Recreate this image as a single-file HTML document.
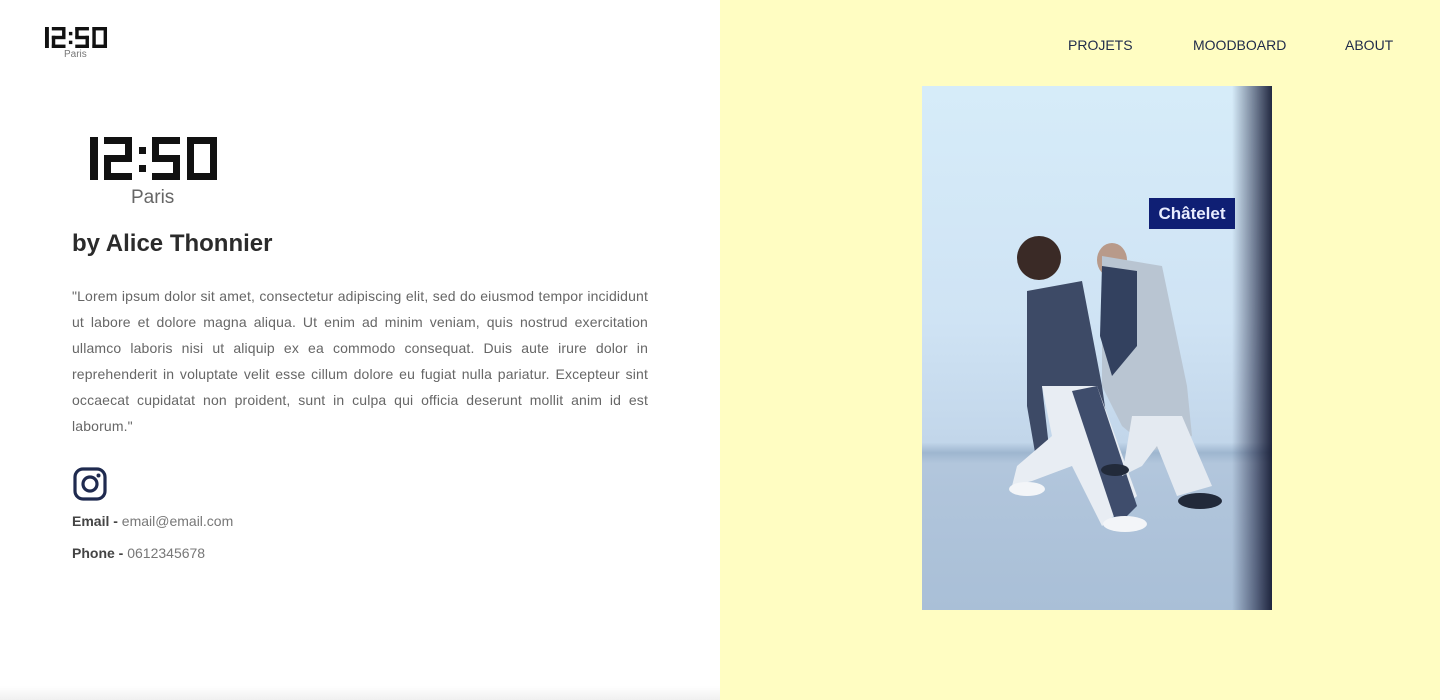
<!DOCTYPE html>
<html><head><meta charset="utf-8"><style>
*{margin:0;padding:0;box-sizing:border-box}
body{width:1440px;height:700px;overflow:hidden;font-family:"Liberation Sans",Arial,sans-serif;background:#fff;position:relative}
.left{position:absolute;left:0;top:0;width:720px;height:700px;background:#fff}
.right{position:absolute;left:720px;top:0;width:720px;height:700px;background:#fffdc2}
.shadow{position:absolute;left:0;bottom:0;width:720px;height:14px;background:linear-gradient(to bottom,rgba(0,0,0,0),rgba(0,0,0,0.06))}
nav a{position:absolute;top:37px;font-size:14px;color:#1e2a4a;text-decoration:none}
h2{position:absolute;left:72px;top:230px;font-size:24px;font-weight:bold;color:#2b2b2b}
p.lorem{position:absolute;left:72px;top:283px;width:576px;font-size:14px;line-height:26px;color:#666;text-align:justify;letter-spacing:0.15px}
.info{position:absolute;left:72px;font-size:14px;color:#777}
.info b{color:#444}
.photo{position:absolute;left:922px;top:86px;width:350px;height:524px;overflow:hidden;
background:linear-gradient(to bottom,#d6ecf9 0%,#cfe3f4 45%,#c2d6ea 68%,#9eb6cf 70%,#b2c6dc 72%,#a9bfd7 100%)}
.photo .dark{position:absolute;right:0;top:0;width:40px;height:100%;background:linear-gradient(to right,rgba(20,30,60,0),rgba(20,25,55,0.55) 60%,rgba(15,20,45,0.9))}
.sign{position:absolute;left:227px;top:112px;width:86px;height:31px;background:#0f1f74;color:#e8ecff;font-size:17px;font-weight:bold;text-align:center;line-height:31px}
</style></head><body>
<div class="left">
 <svg style="position:absolute;left:44px;top:27px" width="64" height="21" viewBox="0 0 127 43">
  <g fill="#111">
   <rect x="0" y="0" width="8" height="43"/>
   <rect x="14" y="0" width="28" height="7"/><rect x="35" y="0" width="7" height="22"/><rect x="14" y="18" width="28" height="7"/><rect x="14" y="18" width="7" height="25"/><rect x="14" y="36" width="28" height="7"/>
   <rect x="49" y="10" width="7" height="7"/><rect x="49" y="28" width="7" height="7"/>
   <rect x="62" y="0" width="28" height="7"/><rect x="62" y="0" width="7" height="22"/><rect x="62" y="18" width="28" height="7"/><rect x="83" y="18" width="7" height="25"/><rect x="62" y="36" width="28" height="7"/>
   <rect x="97" y="0" width="30" height="7"/><rect x="97" y="36" width="30" height="7"/><rect x="97" y="0" width="7" height="43"/><rect x="120" y="0" width="7" height="43"/>
  </g>
 </svg>
 <div style="position:absolute;left:64px;top:49px;font-size:10px;color:#777">Paris</div>
 <svg style="position:absolute;left:90px;top:137px" width="127" height="43" viewBox="0 0 127 43">
  <g fill="#111">
   <rect x="0" y="0" width="8" height="43"/>
   <rect x="14" y="0" width="28" height="7"/><rect x="35" y="0" width="7" height="22"/><rect x="14" y="18" width="28" height="7"/><rect x="14" y="18" width="7" height="25"/><rect x="14" y="36" width="28" height="7"/>
   <rect x="49" y="10" width="7" height="7"/><rect x="49" y="28" width="7" height="7"/>
   <rect x="62" y="0" width="28" height="7"/><rect x="62" y="0" width="7" height="22"/><rect x="62" y="18" width="28" height="7"/><rect x="83" y="18" width="7" height="25"/><rect x="62" y="36" width="28" height="7"/>
   <rect x="97" y="0" width="30" height="7"/><rect x="97" y="36" width="30" height="7"/><rect x="97" y="0" width="7" height="43"/><rect x="120" y="0" width="7" height="43"/>
  </g>
 </svg>
 <div style="position:absolute;left:131px;top:187px;font-size:19px;color:#666">Paris</div>
 <h2>by Alice Thonnier</h2>
 <p class="lorem">"Lorem ipsum dolor sit amet, consectetur adipiscing elit, sed do eiusmod tempor incididunt ut labore et dolore magna aliqua. Ut enim ad minim veniam, quis nostrud exercitation ullamco laboris nisi ut aliquip ex ea commodo consequat. Duis aute irure dolor in reprehenderit in voluptate velit esse cillum dolore eu fugiat nulla pariatur. Excepteur sint occaecat cupidatat non proident, sunt in culpa qui officia deserunt mollit anim id est laborum."</p>
 <svg style="position:absolute;left:73px;top:467px" width="34" height="34" viewBox="0 0 34 34">
  <rect x="2" y="2" width="30" height="30" rx="8" fill="none" stroke="#1f2a4f" stroke-width="3.2"/>
  <circle cx="17" cy="17" r="7" fill="none" stroke="#1f2a4f" stroke-width="3.2"/>
  <circle cx="25.5" cy="8.5" r="2" fill="#1f2a4f"/>
 </svg>
 <div class="info" style="top:513px"><b>Email -</b> email@email.com</div>
 <div class="info" style="top:545px"><b>Phone -</b> 0612345678</div>
 <div class="shadow"></div>
</div>
<div class="right">
 <nav><a style="left:348px">PROJETS</a><a style="left:473px">MOODBOARD</a><a style="left:625px">ABOUT</a></nav>
</div>
<div class="photo">
 <div class="sign">Châtelet</div>
 <svg style="position:absolute;left:0;top:0" width="350" height="524" viewBox="0 0 350 524">
  <circle cx="117" cy="172" r="22" fill="#3a2a26"/>
  <ellipse cx="190" cy="174" rx="15" ry="17" fill="#b89a8a"/>
  <path d="M105 205 L160 195 L180 300 L190 370 L172 375 L150 320 L120 300 L128 370 L115 378 L105 320 Z" fill="#3d4a66"/>
  <path d="M120 300 L175 300 L215 410 L180 440 L150 380 L110 395 L90 400 L95 380 L130 350 Z" fill="#e8edf3"/>
  <path d="M150 305 L175 300 L215 420 L195 440 Z" fill="#3f4d6c"/>
  <path d="M180 170 L240 180 L265 300 L270 350 L230 365 L200 340 L180 300 Z" fill="#b9c5d2"/>
  <path d="M180 180 L215 185 L215 260 L190 290 L178 250 Z" fill="#33415f"/>
  <path d="M210 330 L260 330 L290 400 L255 410 L235 360 L220 380 L200 390 Z" fill="#e4eaf1"/>
  <ellipse cx="105" cy="403" rx="18" ry="7" fill="#f3f5f8"/>
  <ellipse cx="203" cy="438" rx="22" ry="8" fill="#f3f5f8"/>
  <ellipse cx="278" cy="415" rx="22" ry="8" fill="#222a3a"/>
  <ellipse cx="193" cy="384" rx="14" ry="6" fill="#222a3a"/>
 </svg>
 <div class="dark"></div>
</div>
</body></html>
